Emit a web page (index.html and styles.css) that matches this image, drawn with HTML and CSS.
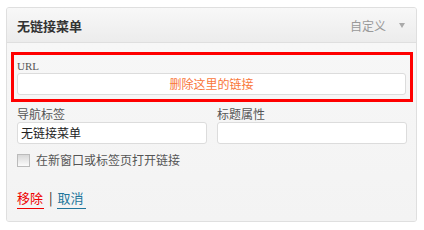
FILE: index.html
```html
<!DOCTYPE html>
<html lang="zh-CN">
<head>
<meta charset="utf-8">
<link rel="stylesheet" href="styles.css">
</head>
<body>
<div class="panel">
  <div class="header">
    <span class="title">无链接菜单</span>
    <span class="meta">自定义<span class="arrow"></span></span>
  </div>
  <div class="body">
    <div class="url-box">
      <div class="url-label">URL</div>
      <div class="input url-input"><span class="hint">删除这里的链接</span></div>
    </div>
    <div class="fields">
      <div class="field">
        <div class="label">导航标签</div>
        <div class="input">无链接菜单</div>
      </div>
      <div class="field">
        <div class="label">标题属性</div>
        <div class="input"></div>
      </div>
    </div>
    <div class="check-row">
      <span class="checkbox"></span>
      <span class="check-label">在新窗口或标签页打开链接</span>
    </div>
    <div class="actions">
      <span class="remove">移除</span>
      <span class="sep">|</span>
      <span class="cancel">取消</span>
    </div>
  </div>
</div>
</body>
</html>
```

FILE: styles.css
```css
html, body {
  margin: 0;
  padding: 0;
  background: #ffffff;
}
body {
  font-family: "Noto Sans CJK SC", "Liberation Sans", sans-serif;
  color: #333;
}
.panel {
  margin: 7px 0 0 6px;
  width: 409px;
  height: 213px;
  border: 1px solid #dfdfdf;
  border-radius: 3px;
  background: #f5f5f5;
  overflow: hidden;
}
.header {
  height: 34px;
  display: flex;
  align-items: center;
  justify-content: space-between;
  padding: 0 11px 0 10px;
  background: linear-gradient(#f8f8f8, #ececec);
  border-bottom: 1px solid #dfdfdf;
}
.title {
  font-size: 13px;
  font-weight: bold;
  color: #333;
}
.meta {
  display: flex;
  align-items: center;
  font-size: 12px;
  color: #999;
}
.arrow {
  width: 0;
  height: 0;
  margin-left: 13px;
  border-left: 3px solid transparent;
  border-right: 3px solid transparent;
  border-top: 5px solid #aaa;
}
.body {
  background: linear-gradient(#f7f7f7, #f3f3f3);
  height: 178px;
  padding-top: 9px;
  box-sizing: border-box;
}
.url-box {
  margin: 0 3px 0 4px;
  border: 3px solid #ff0000;
  padding: 4px 4px 4px 3px;
  height: 50px;
  box-sizing: border-box;
}
.url-label {
  font-family: "Liberation Serif", serif;
  font-size: 11px;
  line-height: 14px;
  color: #555;
}
.input {
  height: 22px;
  box-sizing: border-box;
  border: 1px solid #dcdcdc;
  border-radius: 3px;
  background: #fff;
  font-size: 12px;
  line-height: 20px;
  padding: 0 3px;
  color: #222;
}
.url-input {
  text-align: center;
}
.hint {
  color: #f9763a;
}
.fields {
  display: grid;
  grid-template-columns: 190px 190px;
  column-gap: 10px;
  padding: 4px 0 0 10px;
}
.label {
  font-size: 12px;
  line-height: 16px;
  color: #555;
}
.check-row {
  display: flex;
  align-items: center;
  gap: 6px;
  padding: 9px 0 0 10px;
}
.checkbox {
  width: 13px;
  height: 13px;
  box-sizing: border-box;
  border: 1px solid #bbb;
  background: linear-gradient(#d8d8d8, #fbfbfb);
}
.check-label {
  font-size: 12px;
  line-height: 14px;
  color: #555;
}
.actions {
  display: flex;
  align-items: flex-start;
  padding: 23px 0 0 10px;
  font-size: 13px;
  line-height: 16px;
}
.remove {
  color: #e00;
  border-bottom: 1px solid #e00;
  padding: 0 1px 2px 0;
}
.sep {
  color: #222;
  margin: 0 4px 0 5px;
}
.cancel {
  color: #21759b;
  border-bottom: 1px solid #21759b;
  padding: 0 2px 2px 1px;
}
```
